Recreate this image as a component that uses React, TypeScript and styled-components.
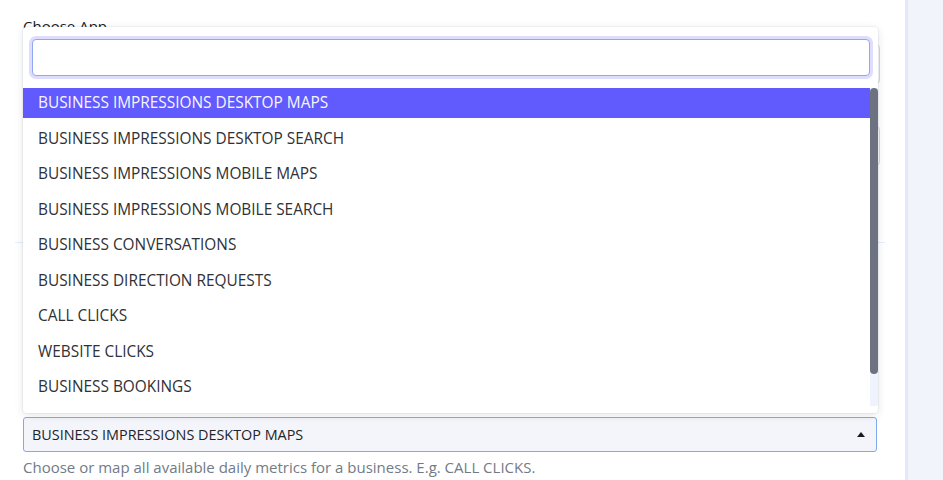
import React from "react";
import styled, { createGlobalStyle } from "styled-components";

const GlobalStyle = createGlobalStyle`
  html, body {
    margin: 0;
    padding: 0;
    background: #ffffff;
    font-family: "Open Sans", "Noto Sans", Arial, sans-serif;
  }
  * { box-sizing: border-box; }
`;

const Page = styled.div`
  display: flex;
  width: 943px;
  height: 480px;
  overflow: hidden;
`;

const Main = styled.main`
  width: 905px;
  flex: none;
  background: #ffffff;
  padding: 16px 0 0 23px;
`;

const Side = styled.aside`
  flex: 1;
  background: #f1f4fa;
  border-left: 3px solid #e5e8f6;
`;

const Form = styled.div`
  width: 857px;
  display: flex;
  flex-direction: column;
`;

const FieldGroup = styled.div<{ $top?: number }>`
  display: flex;
  flex-direction: column;
  gap: 8px;
  margin-top: ${(p) => p.$top ?? 0}px;
`;

const Label = styled.label`
  font-size: 15px;
  line-height: 20px;
  color: #1a1a1a;
`;

const TextInput = styled.div`
  height: 40px;
  border: 1px solid #d5d9e0;
  border-radius: 4px;
  background: #ffffff;
`;

const Divider = styled.hr`
  border: 0;
  height: 1px;
  background: #e6eefc;
  margin: 76px -5px 0 -8px;
`;

const SelectField = styled.div`
  position: relative;
  width: 854px;
  margin-top: 174px;
`;

const SelectBox = styled.div`
  height: 35px;
  display: flex;
  align-items: center;
  justify-content: space-between;
  padding: 0 11px 0 8px;
  background: #f3f5fa;
  border: 1px solid #80a8f3;
  border-radius: 3px;
  font-size: 14.4px;
  color: #1f232b;
`;

const Caret = styled.span`
  width: 0;
  height: 0;
  border-left: 4px solid transparent;
  border-right: 4px solid transparent;
  border-bottom: 5px solid #1b1b1b;
`;

const Help = styled.p`
  margin: 5px 0 0;
  font-size: 15px;
  line-height: 20px;
  color: #737a87;
`;

const Dropdown = styled.div`
  position: absolute;
  left: 0;
  bottom: calc(100% + 4px);
  width: 855px;
  background: #ffffff;
  border-radius: 4px;
  box-shadow: 0 0 0 1px rgba(20, 30, 60, 0.04), 0 2px 8px rgba(20, 30, 60, 0.12);
  padding: 12px 0 7px;
  display: flex;
  flex-direction: column;
  gap: 12px;
`;

const SearchWrap = styled.div`
  padding: 0 8.5px;
`;

const SearchInput = styled.input`
  display: block;
  width: 100%;
  height: 37px;
  border: 1px solid #8fa7f5;
  border-radius: 4px;
  box-shadow: 0 0 0 3px #dfddfd;
  outline: none;
  font: inherit;
  font-size: 15px;
  padding: 0 8px;
`;

const ListArea = styled.div`
  display: flex;
  height: 318px;
`;

const OptionList = styled.ul`
  flex: 1;
  margin: 0;
  padding: 0;
  list-style: none;
  overflow: hidden;
  display: flex;
  flex-direction: column;
  gap: 5.5px;
`;

const Option = styled.li<{ $active?: boolean }>`
  flex: none;
  height: 30px;
  line-height: 29px;
  padding-left: 15px;
  font-size: 15.4px;
  white-space: nowrap;
  color: ${(p) => (p.$active ? "#f7f6ff" : "#2f3136")};
  background: ${(p) => (p.$active ? "#615bfe" : "transparent")};
`;

const ScrollTrack = styled.div`
  width: 8px;
  flex: none;
  background: #eef3fd;
`;

const ScrollThumb = styled.div`
  height: 286px;
  background: #6c727f;
  border-radius: 4px;
`;

const metrics = [
  "BUSINESS IMPRESSIONS DESKTOP MAPS",
  "BUSINESS IMPRESSIONS DESKTOP SEARCH",
  "BUSINESS IMPRESSIONS MOBILE MAPS",
  "BUSINESS IMPRESSIONS MOBILE SEARCH",
  "BUSINESS CONVERSATIONS",
  "BUSINESS DIRECTION REQUESTS",
  "CALL CLICKS",
  "WEBSITE CLICKS",
  "BUSINESS BOOKINGS",
];

export default function App() {
  const selected = metrics[0];
  return (
    <Page>
      <GlobalStyle />
      <Main>
        <Form>
          <FieldGroup>
            <Label>Choose App</Label>
            <TextInput />
          </FieldGroup>
          <FieldGroup $top={42}>
            <TextInput />
          </FieldGroup>
          <Divider />
          <SelectField>
            <Dropdown>
              <SearchWrap>
                <SearchInput aria-label="Search metrics" />
              </SearchWrap>
              <ListArea>
                <OptionList role="listbox">
                  {metrics.map((m) => (
                    <Option key={m} $active={m === selected}>
                      {m}
                    </Option>
                  ))}
                </OptionList>
                <ScrollTrack>
                  <ScrollThumb />
                </ScrollTrack>
              </ListArea>
            </Dropdown>
            <SelectBox>
              <span>{selected}</span>
              <Caret />
            </SelectBox>
          </SelectField>
          <Help>
            Choose or map all available daily metrics for a business. E.g. CALL CLICKS.
          </Help>
        </Form>
      </Main>
      <Side />
    </Page>
  );
}
